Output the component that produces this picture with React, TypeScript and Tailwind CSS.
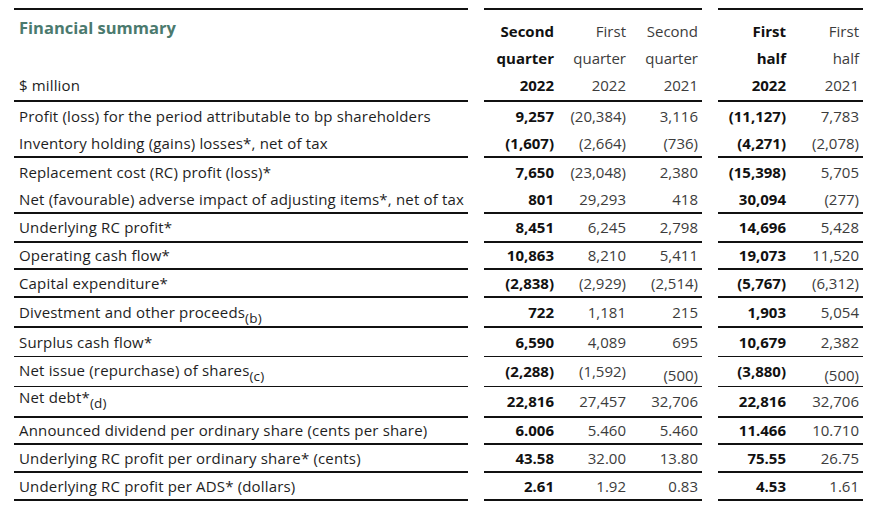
import React from "react";

type Row = {
  label: string;
  sub?: string;
  values: string[];
  h: string; // row content height
  line: string; // bottom rule
  labelPad?: string;
  shift?: number[]; // value cells pushed down
};

const THICK = "border-b-2 border-[#111]";
const THIN = "border-b border-[#111]";

const ROWS: Row[] = [
  {
    label: "Profit (loss) for the period attributable to bp shareholders",
    values: ["9,257", "(20,384)", "3,116", "(11,127)", "7,783"],
    h: "h-[28px]",
    line: "",
  },
  {
    label: "Inventory holding (gains) losses*, net of tax",
    values: ["(1,607)", "(2,664)", "(736)", "(4,271)", "(2,078)"],
    h: "h-[26px]",
    line: THICK,
  },
  {
    label: "Replacement cost (RC) profit (loss)*",
    values: ["7,650", "(23,048)", "2,380", "(15,398)", "5,705"],
    h: "h-[28px]",
    line: "",
  },
  {
    label: "Net (favourable) adverse impact of adjusting items*, net of tax",
    values: ["801", "29,293", "418", "30,094", "(277)"],
    h: "h-[26px]",
    line: THICK,
  },
  {
    label: "Underlying RC profit*",
    values: ["8,451", "6,245", "2,798", "14,696", "5,428"],
    h: "h-[27px]",
    line: THICK,
  },
  {
    label: "Operating cash flow*",
    values: ["10,863", "8,210", "5,411", "19,073", "11,520"],
    h: "h-[25px]",
    line: THICK,
  },
  {
    label: "Capital expenditure*",
    values: ["(2,838)", "(2,929)", "(2,514)", "(5,767)", "(6,312)"],
    h: "h-[26px]",
    line: THICK,
  },
  {
    label: "Divestment and other proceeds",
    sub: "(b)",
    values: ["722", "1,181", "215", "1,903", "5,054"],
    h: "h-[28px]",
    line: THICK,
  },
  {
    label: "Surplus cash flow*",
    values: ["6,590", "4,089", "695", "10,679", "2,382"],
    h: "h-[28px]",
    line: THIN,
  },
  {
    label: "Net issue (repurchase) of shares",
    sub: "(c)",
    values: ["(2,288)", "(1,592)", "(500)", "(3,880)", "(500)"],
    h: "h-[29px]",
    line: THIN,
    labelPad: "pb-[2px]",
    shift: [2, 4],
  },
  {
    label: "Net debt*",
    sub: "(d)",
    values: ["22,816", "27,457", "32,706", "22,816", "32,706"],
    h: "h-[29px]",
    line: THICK,
    labelPad: "pb-[9px]",
  },
  {
    label: "Announced dividend per ordinary share (cents per share)",
    values: ["6.006", "5.460", "5.460", "11.466", "10.710"],
    h: "h-[25px]",
    line: THICK,
  },
  {
    label: "Underlying RC profit per ordinary share* (cents)",
    values: ["43.58", "32.00", "13.80", "75.55", "26.75"],
    h: "h-[26px]",
    line: THICK,
  },
  {
    label: "Underlying RC profit per ADS* (dollars)",
    values: ["2.61", "1.92", "0.83", "4.53", "1.61"],
    h: "h-[26px]",
    line: THICK,
  },
];

const HEADS = [
  ["Second", "quarter", "2022"],
  ["First", "quarter", "2022"],
  ["Second", "quarter", "2021"],
  ["First", "half", "2022"],
  ["First", "half", "2021"],
];

// bold = our period columns
const BOLD = [true, false, false, true, false];

function HeadCell({ lines, bold }: { lines: string[]; bold: boolean }) {
  return (
    <th
      className={`p-0 border-t-2 border-b-2 border-[#111] align-top ${
        bold ? "font-bold text-[#111]" : "font-normal text-[#3c3c3c]"
      }`}
    >
      <div className="pt-[8px] pb-[1px] pr-[4px] text-right leading-[27px]">
        {lines.map((l) => (
          <div key={l}>{l}</div>
        ))}
      </div>
    </th>
  );
}

function ValueCell({ v, bold, row, down }: { v: string; bold: boolean; row: Row; down: boolean }) {
  return (
    <td className={`p-0 ${row.line}`}>
      <div
        className={`${row.h} flex items-center justify-end pr-[4px] ${down ? "pt-[7px]" : ""} ${
          bold ? "font-bold text-[#111]" : "text-[#3c3c3c]"
        }`}
      >
        {v}
      </div>
    </td>
  );
}

export default function App() {
  return (
    <div
      className="min-h-[513px] w-[878px] bg-white pl-[14px] pt-[8px] text-[15px] text-[#1e1e1e]"
      style={{ fontFamily: '"Open Sans", "Noto Sans", sans-serif' }}
    >
      <table className="table-fixed border-separate border-spacing-0 w-[849px]">
        <colgroup>
          <col className="w-[454px]" />
          <col className="w-[16px]" />
          <col className="w-[74px]" />
          <col className="w-[72px]" />
          <col className="w-[72px]" />
          <col className="w-[16px]" />
          <col className="w-[72px]" />
          <col className="w-[73px]" />
        </colgroup>
        <thead>
          <tr>
            <th className="p-0 border-t-2 border-b-2 border-[#111] text-left font-normal align-top">
              <div className="flex h-[90px] flex-col justify-between pl-[5px] pb-[1px]">
                <div className="pt-[8px] text-[16.5px] font-bold leading-[20px] text-[#4b7a6e]">
                  Financial summary
                </div>
                <div className="leading-[27px] tracking-[0.15px]">$ million</div>
              </div>
            </th>
            <th className="p-0" />
            <HeadCell lines={HEADS[0]} bold />
            <HeadCell lines={HEADS[1]} bold={false} />
            <HeadCell lines={HEADS[2]} bold={false} />
            <th className="p-0" />
            <HeadCell lines={HEADS[3]} bold />
            <HeadCell lines={HEADS[4]} bold={false} />
          </tr>
        </thead>
        <tbody>
          {ROWS.map((row) => (
            <tr key={row.label}>
              <td className={`p-0 ${row.line}`}>
                <div
                  className={`${row.h} flex items-center pl-[5px] whitespace-nowrap tracking-[0.17px] ${
                    row.labelPad ?? ""
                  }`}
                >
                  <span>
                    {row.label}
                    {row.sub && <span className="relative top-[5px] text-[13.5px]">{row.sub}</span>}
                  </span>
                </div>
              </td>
              <td className="p-0" />
              {row.values.slice(0, 3).map((v, i) => (
                <ValueCell key={i} v={v} bold={BOLD[i]} row={row} down={!!row.shift?.includes(i)} />
              ))}
              <td className="p-0" />
              {row.values.slice(3).map((v, i) => (
                <ValueCell
                  key={i + 3}
                  v={v}
                  bold={BOLD[i + 3]}
                  row={row}
                  down={!!row.shift?.includes(i + 3)}
                />
              ))}
            </tr>
          ))}
        </tbody>
      </table>
    </div>
  );
}
